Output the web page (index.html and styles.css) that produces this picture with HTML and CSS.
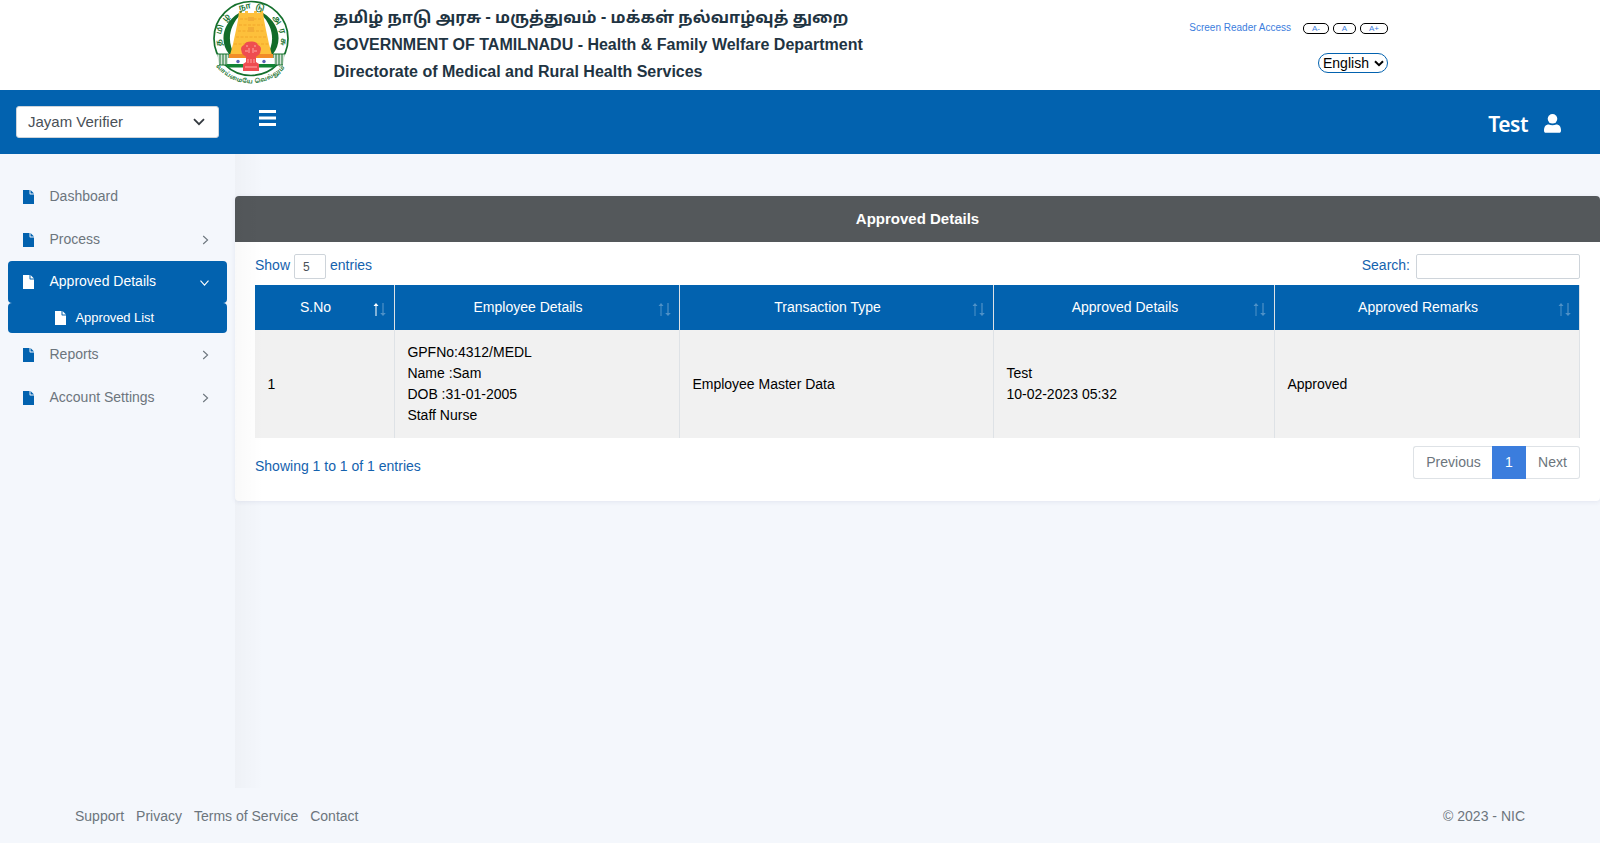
FILE: index.html
```html
<!DOCTYPE html>
<html lang="en">
<head>
<meta charset="utf-8">
<title>Approved Details</title>
<link rel="stylesheet" href="styles.css">
</head>
<body>
<svg class="defs" aria-hidden="true">
  <symbol id="file" viewBox="0 0 11 14"><path d="M0 0h6.500v3.500c0 .6.4 1 1 1H11V14H0z"/><path d="M7.500 0 11 3.500H7.500z"/></symbol>
  <symbol id="chev" viewBox="0 0 7 10"><path d="M1.200 1 5.600 5 1.200 9" fill="none" stroke="currentColor" stroke-width="1.100"/></symbol>
  <symbol id="up" viewBox="0 0 6 13"><path d="M3 0 5.500 3H3.500V13H2.500V3H.5z"/></symbol>
  <symbol id="down" viewBox="0 0 6 13"><path d="M3 13 .2 10H2.400V0h1.200v10h2.200z"/></symbol>
</svg>
<header class="masthead">
  <svg class="emblem" viewBox="0 0 80 90">
    <defs>
      <path id="arcTop" d="M10.900 46A30 30 0 1 1 69.100 46"/>
      <path id="arcBottom" d="M4.500 65.500A44.500 44.500 0 0 0 75.500 65.500"/>
    </defs>
    <circle cx="40" cy="38.500" r="37" fill="#fff" stroke="#14702c" stroke-width="1.700"/>
    <path d="M28 13C10 24 9 43 18 54l6 1C16 43 17 27 30 14zM52 13c18 11 19 30 10 41l-6 1c8-12 7-28-6-41z" fill="#126b2a"/>
    <path d="M28 11h3v2h3v-2h3v2h6v-2h3v2h3v-2h3l1 9 2 10 3 14 3 11H19l3-11 3-14 2-10z" fill="#fdc03b"/>
    <path d="M29 19h22M28 25h24M27 31h26M25 37h30M23 44h34" stroke="#f2a62a" stroke-width="1" stroke-dasharray="3 1.500"/>
    <path d="M37 17h6v4h-6zM37 27h6v5h-6z" fill="#f3ad35"/>
    <path d="M6 54h12v11H8M74 54H62v11h10" fill="#d5e4d8" stroke="#14702c"/>
    <path d="M9 54v11M12 54v11M15 54v11M65 54v11M68 54v11M71 54v11" stroke="#14702c"/>
    <path d="M18 54h44v4H18z" fill="#f28c28"/>
    <path d="M17 58h46v6H17z" fill="#fff"/>
    <path d="M16 64h48v3.500H16z" fill="#138436"/>
    <circle cx="27" cy="61.500" r="1.700" fill="#5a61b5"/><circle cx="53" cy="61.500" r="1.700" fill="#5a61b5"/>
    <path d="M40 41.500c4 0 6 1 7 3.500 3 1 3.500 4 2.500 6 0 3-2 4-3.500 5l-1 1v5l3 2v7H32v-7l3-2v-5l-1-1c-1.500-1-3.500-2-3.500-5-1-2-.5-5 2.500-6 1-2.500 3-3.500 7-3.500z" fill="#ee4d50"/>
    <path d="M35 46h2m6 0h2M34 51h3m6 0h3M38 48v5m4-5v5M37 59v4m3-4v4m3-4v4M34 67h12" stroke="#ffaaa7" stroke-width="1"/>
    <text class="emblem-text"><textPath href="#arcTop" textLength="108">தமிழ் நாடு அரசு</textPath></text>
    <text class="emblem-motto"><textPath href="#arcBottom" startOffset="1" textLength="78">வாய்மையே வெல்லும்</textPath></text>
  </svg>
  <div class="titles">
    <div class="tamil">தமிழ் நாடு அரசு - மருத்துவம் - மக்கள் நல்வாழ்வுத் துறை</div>
    <div>GOVERNMENT OF TAMILNADU - Health &amp; Family Welfare Department</div>
    <div>Directorate of Medical and Rural Health Services</div>
  </div>
  <div class="tools">
    <div class="access"><a>Screen Reader Access</a><span class="pill a1">A-</span><span class="pill a2">A</span><span class="pill a3">A+</span></div>
    <div class="lang">English<svg width="10" height="7" viewBox="0 0 10 7"><path d="M1 1.200 5 5.200 9 1.200" fill="none" stroke="#000" stroke-width="2"/></svg></div>
  </div>
</header>
<nav class="topbar">
  <div class="role"><span>Jayam Verifier</span><svg width="12" height="8" viewBox="0 0 12 8"><path d="M1 1.200 6 6.200 11 1.200" fill="none" stroke="#343a40" stroke-width="1.800"/></svg></div>
  <svg class="burger" width="17" height="16" viewBox="0 0 17 16"><path d="M0 1.500h17M0 8h17M0 14.500h17" stroke="#fff" stroke-width="2.900"/></svg>
  <div class="user"><span>Test</span><svg width="17" height="19" viewBox="0 0 17 19"><circle cx="8.500" cy="4.800" r="4.800" fill="#fff"/><path d="M0 16.500c0-4 1.800-6 4.800-6 1 .4 2.300.8 3.700.8s2.700-.4 3.700-.8c3 0 4.800 2 4.800 6 0 1.500-.6 2.300-2 2.300H2c-1.400 0-2-.8-2-2.300z" fill="#fff"/></svg></div>
</nav>
<div class="shell">
  <aside class="sidebar">
    <a class="item"><svg class="file"><use href="#file"/></svg>Dashboard</a>
    <a class="item"><svg class="file"><use href="#file"/></svg>Process<svg class="chev"><use href="#chev"/></svg></a>
    <a class="item active"><svg class="file"><use href="#file"/></svg>Approved Details<svg class="chev open"><use href="#chev"/></svg></a>
    <a class="item sub active"><svg class="file"><use href="#file"/></svg>Approved List</a>
    <a class="item"><svg class="file"><use href="#file"/></svg>Reports<svg class="chev"><use href="#chev"/></svg></a>
    <a class="item"><svg class="file"><use href="#file"/></svg>Account Settings<svg class="chev"><use href="#chev"/></svg></a>
  </aside>
  <main class="content">
    <section class="card">
      <h1 class="card-title">Approved Details</h1>
      <div class="card-body">
        <div class="controls">
          <label class="length">Show <span class="count">5</span> entries</label>
          <label class="search">Search:<input type="text"></label>
        </div>
        <table class="grid">
          <colgroup><col class="c1"><col class="c2"><col class="c3"><col class="c4"><col class="c5"></colgroup>
          <thead><tr>
            <th class="asc">S.No<span class="sort"><svg><use href="#up"/></svg><svg><use href="#down"/></svg></span></th>
            <th>Employee Details<span class="sort"><svg><use href="#up"/></svg><svg><use href="#down"/></svg></span></th>
            <th>Transaction Type<span class="sort"><svg><use href="#up"/></svg><svg><use href="#down"/></svg></span></th>
            <th>Approved Details<span class="sort"><svg><use href="#up"/></svg><svg><use href="#down"/></svg></span></th>
            <th>Approved Remarks<span class="sort"><svg><use href="#up"/></svg><svg><use href="#down"/></svg></span></th>
          </tr></thead>
          <tbody><tr>
            <td>1</td>
            <td>GPFNo:4312/MEDL<br>Name :Sam<br>DOB :31-01-2005<br>Staff Nurse</td>
            <td>Employee Master Data</td>
            <td>Test<br>10-02-2023 05:32</td>
            <td>Approved</td>
          </tr></tbody>
        </table>
        <div class="summary">
          <div class="info">Showing 1 to 1 of 1 entries</div>
          <div class="pager"><span class="prev">Previous</span><span class="page">1</span><span class="next">Next</span></div>
        </div>
      </div>
    </section>
  </main>
</div>
<footer class="footer">
  <div class="links"><a>Support</a><a>Privacy</a><a>Terms of Service</a><a>Contact</a></div>
  <div>© 2023 - NIC</div>
</footer>
</body>
</html>
```
FILE: styles.css
```css
* { box-sizing: border-box; }
body {
  margin: 0;
  height: 843px;
  overflow: hidden;
  display: flex;
  flex-direction: column;
  background: #f4f7fc;
  color: #6c757d;
  font: 14px/21px "Liberation Sans", Arial, sans-serif;
}
.defs { position: absolute; width: 0; height: 0; }

.masthead { height: 90px; background: #fff; display: flex; flex: none; }
.emblem { width: 80px; height: 90px; margin-left: 210.5px; flex: none; }
.emblem-text { font: 600 8px "Noto Sans Tamil", "Noto Sans", sans-serif; fill: #14702c; }
.emblem-motto { font: 600 6px "Noto Sans Tamil", "Noto Sans", sans-serif; fill: #14702c; }
.titles { width: 799px; margin-left: 43px; padding-top: 4px; font-weight: bold; font-size: 16px; line-height: 27px; color: #1f3442; white-space: nowrap; }
.tamil { height: 27px; padding-top: 2px; font-family: "Noto Sans Tamil", "Liberation Sans", sans-serif; letter-spacing: .12px; }
.tools { width: 255.5px; display: flex; flex-direction: column; align-items: flex-end; padding-top: 22px; }
.access { display: flex; align-items: center; height: 12px; font-size: 10px; line-height: 12px; color: #3b7ddd; white-space: nowrap; }
.access a { margin-right: 12px; }
.pill { height: 11px; margin-top: 1px; border: 1px solid #000; border-radius: 5px; font-size: 8px; line-height: 9px; text-align: center; }
.a1 { width: 26px; }
.a2 { width: 23px; margin: 1px 4px 0; }
.a3 { width: 28px; }
.lang { margin-top: 19px; width: 70px; height: 20px; border: 1px solid #0262af; border-radius: 10px; display: flex; align-items: center; gap: 5px; padding-left: 4px; color: #000; line-height: 18px; }

.topbar { height: 64px; background: #0262af; display: flex; flex: none; }
.role { width: 203px; height: 32px; margin: 16px 0 0 16px; padding: 0 13px 0 11px; background: #fff; border: 1px solid #ced4da; border-radius: 3px; display: flex; align-items: center; justify-content: space-between; font-size: 15px; color: #495057; }
.role span { padding-bottom: 2px; }
.burger { margin: 20px 0 0 40px; }
.user { margin: 0 39px 0 auto; height: 68px; display: flex; align-items: center; gap: 16px; color: #fff; font: 600 21px "Noto Sans", "Open Sans", sans-serif; letter-spacing: -.5px; }
.user svg { margin-bottom: 1px; }

.shell { display: flex; flex: none; height: 634px; }
.sidebar { width: 235px; flex: none; padding: 21.2px 8px 0; }
.item { display: flex; align-items: center; height: 42.67px; padding: 0 18px 0 15px; color: #6c757d; border-radius: 4px; }
.item .file { width: 11px; height: 14px; margin: 1px 15.500px 0 0; fill: #0262af; flex: none; }
.chev { width: 7px; height: 10px; margin: 2px 0 0 auto; }
.chev.open { transform: rotate(90deg); margin-right: 1px; }
.item.active { background: #0262af; color: #fff; }
.item.active .file { fill: #fff; }
.item.sub { height: 30px; padding-left: 47px; padding-bottom: 2px; font-size: 13px; letter-spacing: -.08px; }
.item.sub .file { margin: 1px 9.500px 0 0; }

.content { flex: 1; padding-top: 42px; position: relative; }
.content::after { content: ""; position: absolute; inset: 0 auto 0 0; width: 28px; background: linear-gradient(to right, rgba(0,0,0,.024), rgba(0,0,0,0)); }
.card { height: 305px; background: #fff; border-radius: 4px; overflow: hidden; box-shadow: 0 1px 5px rgba(41,52,122,.09); }
.card-title { margin: 0; height: 46px; background: #54585b; color: #fff; font-size: 15px; line-height: 46px; text-align: center; }
.card-body { padding: 12px 20px 0; }
.controls { display: flex; justify-content: space-between; height: 31px; color: #1462ae; }
.length, .search { display: flex; line-height: 22px; gap: 4px; }
.count { width: 32px; height: 25px; border: 1px solid #ced4da; border-radius: 2px; padding-left: 8px; font-size: 12px; line-height: 24px; color: #495057; }
.search { gap: 6px; }
.search input { width: 164px; height: 25px; border: 1px solid #ced4da; border-radius: 2px; background: #fff; }
.grid { width: 1325px; table-layout: fixed; border-collapse: separate; border-spacing: 0; color: #000; }
.c1 { width: 140px; } .c2 { width: 285px; } .c3 { width: 314px; } .c4 { width: 281px; } .c5 { width: 305px; }
.grid th { height: 45px; padding: 0 30px 0 12px; background: #0262af; color: #fff; font-weight: normal; border-right: 1px solid #dee2e6; position: relative; }
.sort { position: absolute; right: 8px; top: 17.500px; display: flex; gap: 1px; }
.sort svg { width: 6px; height: 13px; fill: #fff; opacity: .3; }
.asc .sort svg:first-child { opacity: 1; }
.grid td { height: 108px; padding: 0 12px 0 12.4px; background: #f1f1f1; border-right: 1px solid #dee2e6; vertical-align: middle; }
.summary { display: flex; justify-content: space-between; color: #1462ae; }
.info { padding-top: 18px; }
.pager { margin-top: 8px; height: 33px; display: flex; line-height: 31px; color: #6c757d; }
.pager span { border: 1px solid #dee2e6; text-align: center; background: #fff; }
.pager .prev { width: 79px; border-radius: 3px 0 0 3px; border-right: 0; padding-left: 1px; }
.pager .page { width: 34px; background: #3b7ddd; border-color: #3b7ddd; color: #fff; }
.pager .next { width: 54px; border-left: 0; border-radius: 0 3px 3px 0; }

.footer { flex: 1; padding: 18px 75px 0; display: flex; justify-content: space-between; }
.links { display: flex; gap: 12px; }
```
